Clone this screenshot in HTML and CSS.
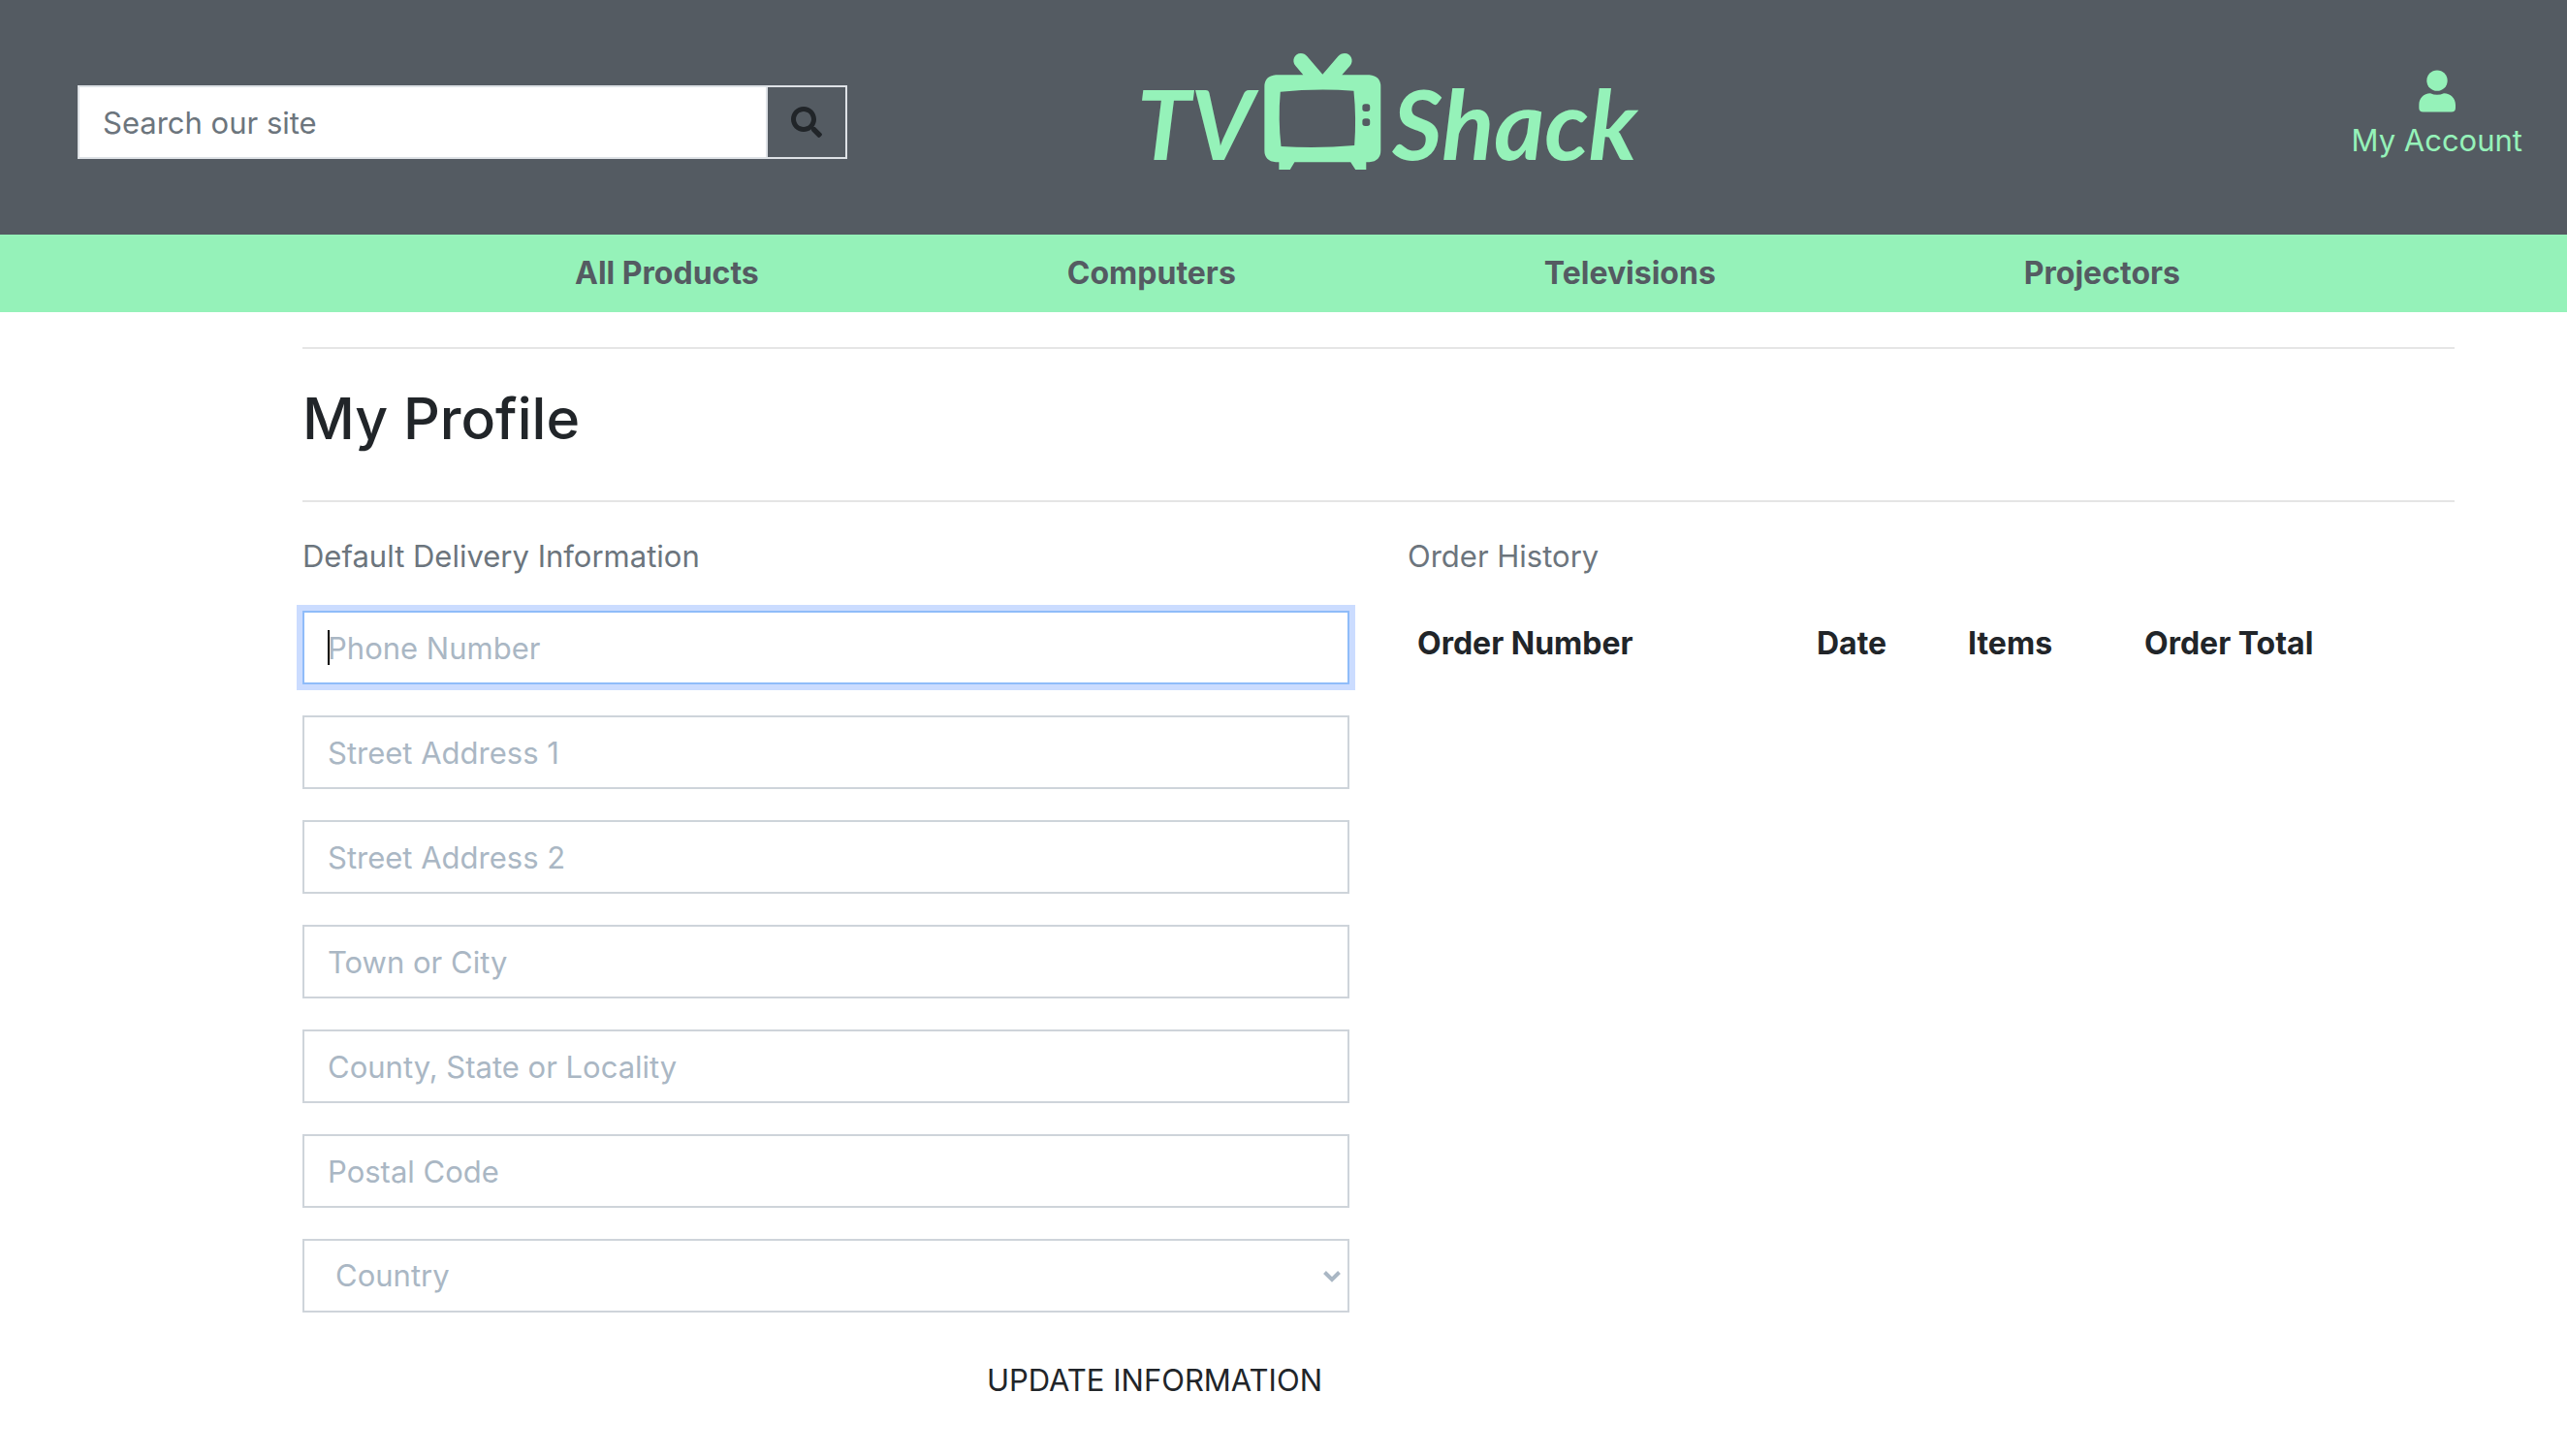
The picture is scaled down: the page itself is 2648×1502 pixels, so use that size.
FILE: index.html
```html
<!DOCTYPE html>
<html lang="en">
<head>
<meta charset="utf-8">
<meta name="viewport" content="width=device-width, initial-scale=1">
<title>TV Shack - My Profile</title>
<link rel="stylesheet" href="styles.css">
</head>
<body>
<header class="site-header">
  <form class="search" role="search">
    <input class="search-input" type="search" placeholder="Search our site" aria-label="Search our site">
    <button class="search-button" type="submit" aria-label="Search">
      <svg class="search-icon" viewBox="0 0 512 512" aria-hidden="true"><path fill="currentColor" d="M505 442.700 405.300 343c-4.500-4.500-10.600-7-17-7H372c27.600-35.300 44-79.700 44-128C416 93.100 322.900 0 208 0S0 93.100 0 208s93.100 208 208 208c48.300 0 92.700-16.400 128-44v16.300c0 6.400 2.500 12.500 7 17l99.700 99.700c9.400 9.400 24.600 9.400 33.900 0l28.300-28.300c9.400-9.400 9.400-24.600.1-34zM208 336c-70.700 0-128-57.200-128-128 0-70.700 57.200-128 128-128 70.700 0 128 57.200 128 128 0 70.700-57.200 128-128 128z"/></svg>
    </button>
  </form>
  <a class="logo" href="#">
    <span class="logo-word">TV</span>
    <svg class="logo-tv" viewBox="402 72 339 366" preserveAspectRatio="none" aria-hidden="true">
      <path fill="currentColor" fill-rule="evenodd" d="M436 142H515L493 114C480 98 490 75 508 75C516 75 521 78 526 84L571 140L616 84C621 78 627 75 635 75C653 75 663 98 650 114L627 142H706Q739 145 739 178V376Q739 409 706 412H697V435H666L652 412H490L477 435H445V412H436Q403 409 403 376V178Q403 145 436 142ZM449 194Q442 280 451 363Q555 371 663 360Q669 275 661 191Q555 183 449 194ZM694 232Q686 232 686 240V247Q686 255 694 255H700Q708 255 708 247V240Q708 232 700 232ZM694 277Q686 277 686 285V292Q686 300 694 300H700Q708 300 708 292V285Q708 277 700 277Z"/>
    </svg>
    <span class="logo-word">Shack</span>
  </a>
  <a class="account" href="#">
    <svg class="account-icon" viewBox="351 97 114 131" aria-hidden="true"><circle cx="408" cy="130" r="32" fill="currentColor"/><path fill="currentColor" d="M387 169Q408 179 429 169C450 169 465 184 465 205V214Q465 227 452 227H365Q352 227 352 214V205C352 184 366 169 387 169Z"/></svg>
    <span>My Account</span>
  </a>
</header>
<nav class="main-nav" aria-label="Main">
  <a href="#">All Products</a>
  <a href="#">Computers</a>
  <a href="#">Televisions</a>
  <a href="#">Projectors</a>
</nav>
<main class="page">
  <h1 class="page-title">My Profile</h1>
  <div class="columns">
    <section>
      <h2 class="section-title">Default Delivery Information</h2>
      <form class="profile-form">
        <div class="field-wrap">
          <input class="field" type="text" placeholder="Phone Number" aria-label="Phone Number" autofocus>
          <span class="caret" aria-hidden="true"></span>
        </div>
        <input class="field" type="text" placeholder="Street Address 1" aria-label="Street Address 1">
        <input class="field" type="text" placeholder="Street Address 2" aria-label="Street Address 2">
        <input class="field" type="text" placeholder="Town or City" aria-label="Town or City">
        <input class="field" type="text" placeholder="County, State or Locality" aria-label="County, State or Locality">
        <input class="field" type="text" placeholder="Postal Code" aria-label="Postal Code">
        <div class="field-wrap">
          <select class="field field-select" aria-label="Country"><option>Country</option></select>
          <svg class="chevron" viewBox="0 0 18 12" aria-hidden="true"><path d="M1.500 1.500 9 9 16.500 1.500" fill="none" stroke="currentColor" stroke-width="4"/></svg>
        </div>
        <button class="update" type="submit">UPDATE INFORMATION</button>
      </form>
    </section>
    <section>
      <h2 class="section-title">Order History</h2>
      <table class="orders">
        <thead>
          <tr><th class="col-number" scope="col">Order Number</th><th class="col-date" scope="col">Date</th><th class="col-items" scope="col">Items</th><th scope="col">Order Total</th></tr>
        </thead>
      </table>
    </section>
  </div>
</main>
</body>
</html>
```
FILE: styles.css
```css
* { box-sizing: border-box; }

body {
  margin: 0;
  background: #fff;
  color: #212529;
  font: 400 31px/48px Inter, "Liberation Sans", sans-serif;
}

a { color: inherit; text-decoration: none; }
input, select, button { font: inherit; color: inherit; margin: 0; border-radius: 0; }

.site-header {
  display: grid;
  grid-template-columns: 1fr 1fr 1fr;
  min-height: 242px;
  background: #545b62;
  color: #95f2b9;
}

.search {
  display: flex;
  align-self: start;
  margin: 88px 9px 0 80px;
}

.search-input {
  flex: 1;
  min-width: 0;
  height: 76px;
  padding: 0 24px;
  border: 2px solid #dee2e6;
  border-right-width: 0;
  background: #fff;
  color: #212529;
  appearance: none;
}
.search-input::placeholder { color: #6c757d; opacity: 1; }

.search-button {
  display: grid;
  place-items: center;
  width: 84px;
  height: 76px;
  padding: 0;
  border: 2px solid #dee2e6;
  background: #545b62;
  color: #212529;
}
.search-icon { width: 32px; height: 32px; }

.logo {
  display: flex;
  align-items: flex-start;
  justify-self: start;
  gap: 11px;
  padding: 54px 0 0 290px;
}
.logo-word {
  padding-top: 16px;
  font: italic 700 100px/112px Lato, sans-serif;
}
.logo-tv { width: 121px; height: 122px; }

.account {
  display: flex;
  flex-direction: column;
  align-items: center;
  justify-self: end;
  gap: 5px;
  padding: 72px 46px 0 0;
}
.account-icon { width: 38px; height: 44px; }

.main-nav {
  display: flex;
  justify-content: center;
  gap: 318px;
  padding: 16px 0 16px 194px;
  background: #95f2b9;
  color: #545b62;
  font-size: 32px;
  font-weight: 700;
}

.page { padding: 36px 116px 40px 312px; }

.page-title {
  margin: 0;
  padding: 32px 0 44px;
  border-top: 2px solid #e5e5e5;
  border-bottom: 2px solid #e5e5e5;
  font-size: 59px;
  line-height: 80px;
  font-weight: 500;
}

.columns {
  display: grid;
  grid-template-columns: 1fr 1fr;
  gap: 60px;
  padding-top: 32px;
}

.section-title {
  margin: 0 0 32px;
  color: #6c757d;
  font-size: 31px;
  font-weight: 400;
}

.profile-form { display: flex; flex-direction: column; gap: 32px; }

.field {
  display: block;
  width: 100%;
  height: 76px;
  padding: 0 24px;
  border: 2px solid #ced4da;
  background: #fff;
}
.field::placeholder { color: #aab7c4; opacity: 1; }
.field:focus {
  border-color: #8fbcf9;
  outline: 0;
  box-shadow: 0 0 0 6px #cbdcff;
  caret-color: transparent;
}

.field-wrap { position: relative; }
.caret {
  position: absolute;
  top: 20px;
  left: 26px;
  width: 2px;
  height: 36px;
  background: #000;
}
.field-select { padding: 0 32px; color: #aab7c4; appearance: none; }
.chevron {
  position: absolute;
  top: 33px;
  right: 9px;
  width: 18px;
  height: 12px;
  color: #aab7c4;
  pointer-events: none;
}

.update {
  align-self: flex-end;
  height: 76px;
  padding: 0 28px;
  border: 0;
  background: transparent;
}

.orders { width: 100%; border-collapse: collapse; table-layout: fixed; }
.orders th { padding: 10px; text-align: left; font-size: 32px; font-weight: 700; }
.col-number { width: 412px; }
.col-date { width: 156px; }
.col-items { width: 182px; }
```
